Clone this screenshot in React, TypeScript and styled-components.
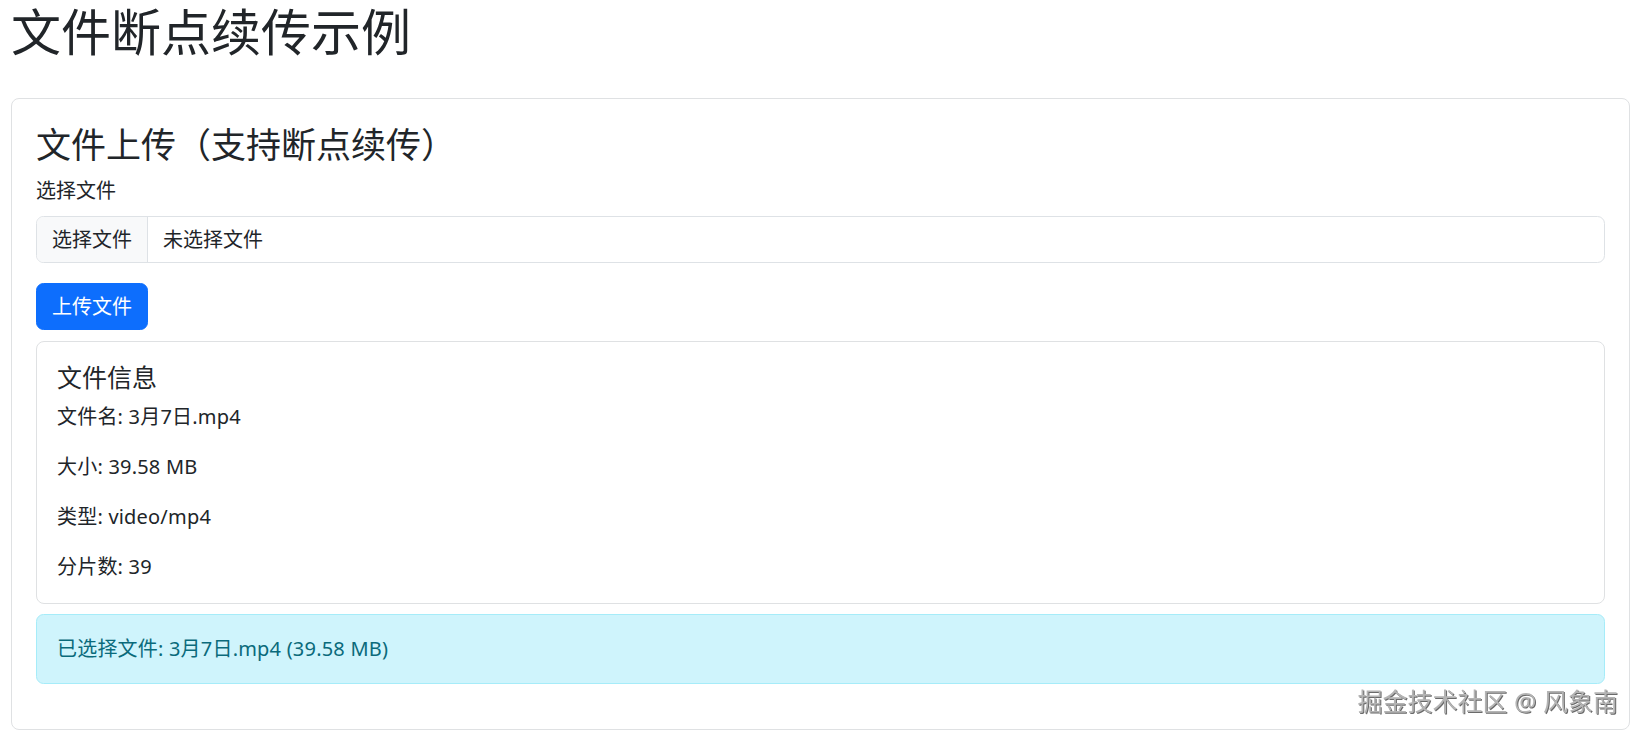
import React from "react";
import styled, { createGlobalStyle } from "styled-components";

const GlobalStyle = createGlobalStyle`
  html, body {
    margin: 0;
    padding: 0;
    background: #fff;
  }

  body {
    font-family: "Noto Sans", "Noto Sans CJK SC", sans-serif;
    font-size: 20px;
    line-height: 1.5;
    color: #212529;
  }

  * {
    box-sizing: border-box;
  }
`;

const Page = styled.div`
  padding: 0 10px 0 11px;
`;

const PageTitle = styled.h1`
  margin: 2px 0 36px;
  font-size: 50px;
  font-weight: 400;
  line-height: 1.2;
`;

const Card = styled.div<{ inner?: boolean }>`
  border: 1px solid #dfe1e3;
  border-radius: 8px;
  background: #fff;
  margin-top: ${(props) => (props.inner ? "11px" : "0")};
`;

const CardBody = styled.div<{ inner?: boolean }>`
  padding: ${(props) => (props.inner ? "20px 20px 21px" : "25px 24px 25px")};
`;

const SectionTitle = styled.h3`
  margin: 0 0 10px;
  font-size: 35px;
  font-weight: 400;
  line-height: 1.2;
`;

const FieldLabel = styled.label`
  display: inline-block;
  margin-bottom: 10px;
`;

const FileField = styled.div`
  display: flex;
  align-items: stretch;
  border: 1px solid #dee2e6;
  border-radius: 7.5px;
  overflow: hidden;
  cursor: pointer;
`;

const FileButton = styled.span`
  padding: 7.5px 15px;
  background: #f8f9fa;
  border-right: 1px solid #dee2e6;
  white-space: nowrap;
`;

const FileName = styled.span`
  padding: 7.5px 15px;
  white-space: nowrap;
`;

const PrimaryButton = styled.button`
  display: block;
  margin-top: 20px;
  padding: 7.5px 15px;
  border: 1px solid #0d6efd;
  border-radius: 7.5px;
  background: #0d6efd;
  color: #fff;
  font: inherit;
  cursor: pointer;
`;

const InfoTitle = styled.h5`
  margin: 0 0 10px;
  font-size: 25px;
  font-weight: 400;
  line-height: 1.2;
`;

const InfoLine = styled.p`
  margin: 0 0 20px;
  letter-spacing: 0.2px;

  &:last-child {
    margin-bottom: 0;
  }
`;

const Alert = styled.div`
  margin: 10px 0 20px;
  padding: 19px 20px;
  border: 1px solid #a6ecf9;
  border-radius: 7.5px;
  background: #cff4fc;
  color: #0a6a7b;
  letter-spacing: 0.2px;
`;

const Watermark = styled.div`
  position: fixed;
  right: 22px;
  bottom: 20px;
  font-size: 25px;
  line-height: 1;
  color: #b4b4b4;
  text-shadow: 1px 1px 0 #6a6a6a, -1px -1px 0 #fff;
  pointer-events: none;
`;

const file = {
  name: "3月7日.mp4",
  size: "39.58 MB",
  type: "video/mp4",
  chunks: 39,
};

export default function App() {
  return (
    <>
      <GlobalStyle />
      <Page>
        <PageTitle>文件断点续传示例</PageTitle>
        <Card>
          <CardBody>
            <SectionTitle>文件上传（支持断点续传）</SectionTitle>
            <FieldLabel>选择文件</FieldLabel>
            <FileField>
              <FileButton>选择文件</FileButton>
              <FileName>未选择文件</FileName>
            </FileField>
            <PrimaryButton>上传文件</PrimaryButton>
            <Card inner>
              <CardBody inner>
                <InfoTitle>文件信息</InfoTitle>
                <InfoLine>文件名: {file.name}</InfoLine>
                <InfoLine>大小: {file.size}</InfoLine>
                <InfoLine>类型: {file.type}</InfoLine>
                <InfoLine>分片数: {file.chunks}</InfoLine>
              </CardBody>
            </Card>
            <Alert>
              已选择文件: {file.name} ({file.size})
            </Alert>
          </CardBody>
        </Card>
      </Page>
      <Watermark>掘金技术社区 @ 风象南</Watermark>
    </>
  );
}
